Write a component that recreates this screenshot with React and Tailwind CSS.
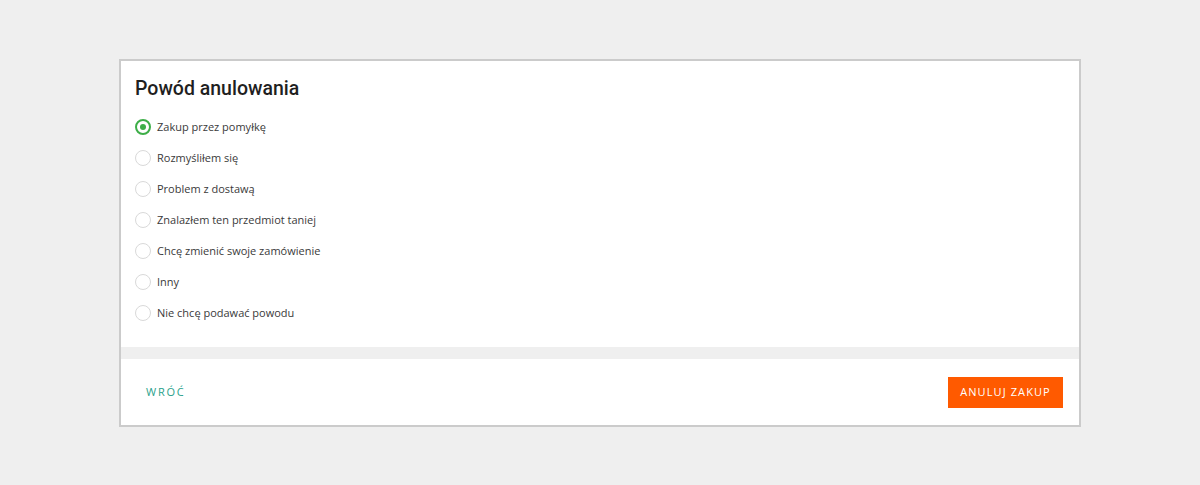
const reasons = [
  'Zakup przez pomyłkę',
  'Rozmyśliłem się',
  'Problem z dostawą',
  'Znalazłem ten przedmiot taniej',
  'Chcę zmienić swoje zamówienie',
  'Inny',
  'Nie chcę podawać powodu',
]

function Radio({ checked }) {
  if (checked) {
    return (
      <span className="flex h-4 w-4 shrink-0 items-center justify-center rounded-full border-2 border-[#3dae48] bg-white">
        <span className="h-[6px] w-[6px] rounded-full bg-[#3dae48]" />
      </span>
    )
  }
  return <span className="h-4 w-4 shrink-0 rounded-full border border-[#d9d9d9] bg-white" />
}

export default function App() {
  return (
    <div className="min-h-[485px] bg-[#efefef] pt-[59px]" style={{ fontFamily: '"Open Sans", sans-serif' }}>
      <div className="mx-auto w-[962px] border-2 border-[#cbcbcb] bg-white">
        <div className="px-[14px] pt-[14px] pb-[26px]">
          <h2 className="font-['Roboto'] text-[19.5px] leading-[28px] font-medium text-[#1f1f1f]">Powód anulowania</h2>
          <ul className="mt-[16px] flex flex-col gap-[15px]">
            {reasons.map((r, i) => (
              <li key={r} className="flex h-4 items-center gap-[6px]">
                <Radio checked={i === 0} />
                <span className="text-[11px] leading-4 text-[#3a3a3a]">{r}</span>
              </li>
            ))}
          </ul>
        </div>
        <div className="h-3 bg-[#efefef]" />
        <div className="flex h-[66px] items-center justify-between pl-[25px] pr-[16px]">
          <button type="button" className="text-[11px] font-medium tracking-[0.16em] text-[#2a9f8b]">
            WRÓĆ
          </button>
          <button
            type="button"
            className="h-[31px] w-[115px] bg-[#ff5a00] text-[11px] font-medium tracking-[0.1em] text-white"
          >
            ANULUJ ZAKUP
          </button>
        </div>
      </div>
    </div>
  )
}
